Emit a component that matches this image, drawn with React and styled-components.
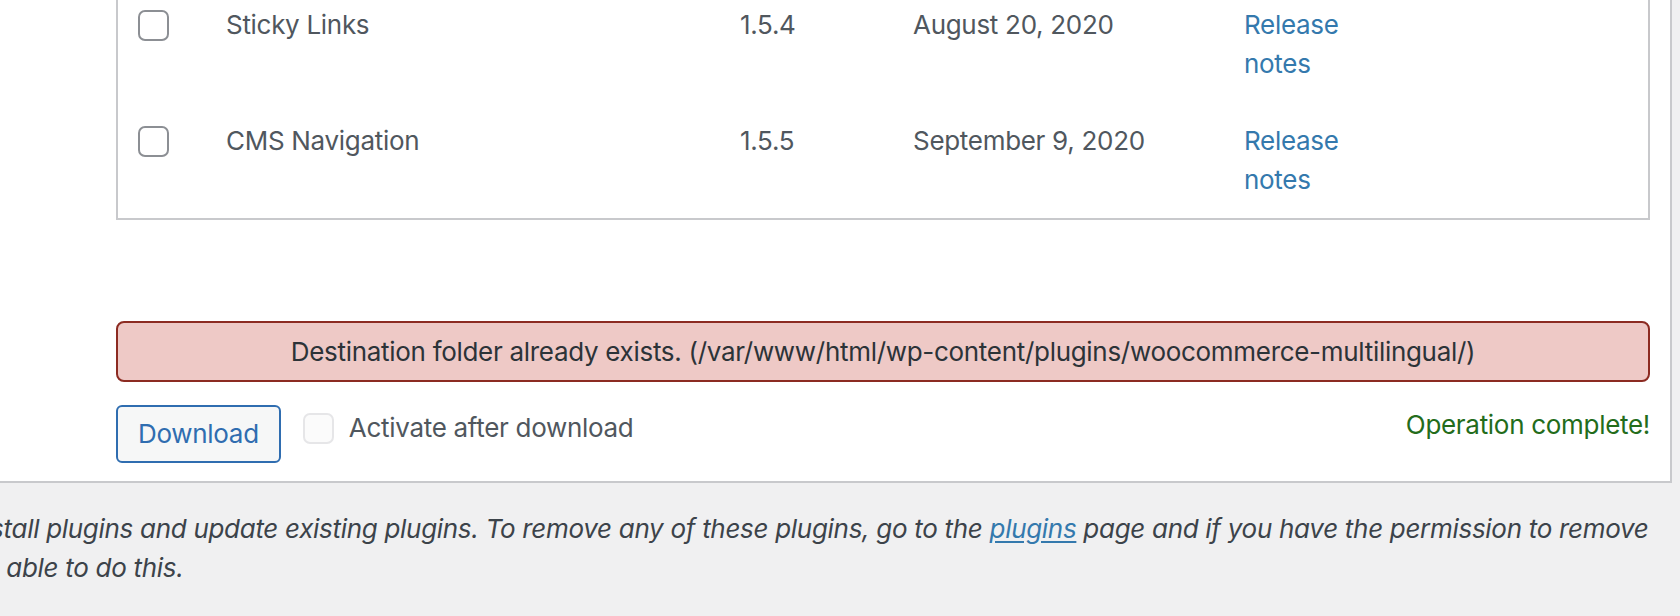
import React from "react";
import styled, { createGlobalStyle } from "styled-components";

const GlobalStyle = createGlobalStyle`
  html, body {
    margin: 0;
    padding: 0;
    background: #f0f0f1;
    overflow: hidden;
  }
  body {
    font-family: "Inter", "Liberation Sans", sans-serif;
    font-size: 26px;
    line-height: 39px;
    letter-spacing: -0.3px;
    color: #3c434a;
  }
`;

/* page is scrolled: the wrap starts a little above and left of the viewport */
const Wrap = styled.div`
  width: 1703px;
  margin: -14px 0 0 -31px;
`;

const Panel = styled.div`
  background: #fff;
  border: 2px solid #c8c9cc;
  border-top: none;
  border-left: none;
  padding: 0 20px 18px 147px;
`;

const Table = styled.div`
  border: 2px solid #c8c9cc;
  border-top: none;
`;

const Row = styled.div`
  display: grid;
  grid-template-columns: 88px 514px 173px 331px 1fr;
  align-items: start;
  padding: 19px 0 19px 20px;
  color: #50575e;
`;

const Check = styled.span`
  display: block;
  box-sizing: border-box;
  width: 31px;
  height: 31px;
  margin-top: 5px;
  border: 2px solid ${(p) => (p.$faded ? "#e6e6e8" : "#8c8f94")};
  border-radius: 7px;
  background: ${(p) => (p.$faded ? "#fbfbfb" : "#fff")};
`;

const Cell = styled.div``;

const NoteLink = styled.a`
  color: #3479ad;
  text-decoration: none;
  display: block;
  width: 100px;
`;

const Notice = styled.div`
  margin-top: 101px;
  padding: 9px 10px;
  border: 2px solid #8c2b22;
  border-radius: 8px;
  background: #eec9c6;
  color: #2c3338;
  text-align: center;
`;

const Actions = styled.div`
  display: flex;
  align-items: flex-start;
  margin-top: 23px;
`;

const Button = styled.button`
  box-sizing: border-box;
  height: 58px;
  padding: 0 20px;
  border: 2px solid #2f6db0;
  border-radius: 6px;
  background: #f6f7f7;
  color: #2f6db0;
  font: inherit;
  letter-spacing: inherit;
  line-height: 54px;
  cursor: pointer;
`;

const ActivateLabel = styled.label`
  display: flex;
  align-items: flex-start;
  gap: 15px;
  margin: 3px 0 0 22px;
  color: #50575e;
`;

const Complete = styled.span`
  margin: 0 0 0 auto;
  color: #236c1b;
`;

const Footer = styled.p`
  margin: 26px 0 0;
  font-style: italic;
  color: #3c434a;
  white-space: nowrap;
`;

const FooterLink = styled.a`
  color: #3479ad;
  text-decoration: underline;
  text-underline-offset: 3px;
`;

const plugins = [
  { name: "Sticky Links", version: "1.5.4", date: "August 20, 2020" },
  { name: "CMS Navigation", version: "1.5.5", date: "September 9, 2020" },
];

export default function App() {
  return (
    <>
      <GlobalStyle />
      <Wrap>
        <Panel>
          <Table>
            {plugins.map((p) => (
              <Row key={p.name}>
                <Check />
                <Cell>{p.name}</Cell>
                <Cell>{p.version}</Cell>
                <Cell>{p.date}</Cell>
                <NoteLink href="#">Release notes</NoteLink>
              </Row>
            ))}
          </Table>
          <Notice>
            Destination folder already exists.
            (/var/www/html/wp-content/plugins/woocommerce-multilingual/)
          </Notice>
          <Actions>
            <Button>Download</Button>
            <ActivateLabel>
              <Check $faded />
              Activate after download
            </ActivateLabel>
            <Complete>Operation complete!</Complete>
          </Actions>
        </Panel>
        <Footer>
          install plugins and update existing plugins. To remove any of these
          plugins, go to the <FooterLink href="#">plugins</FooterLink> page and
          if you have the permission to remove
          <br />
          be able to do this.
        </Footer>
      </Wrap>
    </>
  );
}
